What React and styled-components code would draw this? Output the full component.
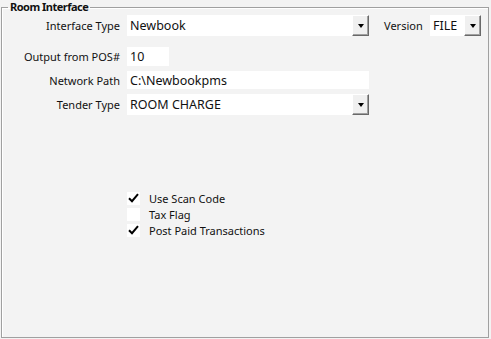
import React from "react"
import styled, { createGlobalStyle } from "styled-components"

const GlobalStyle = createGlobalStyle`
  html, body {
    margin: 0;
    padding: 0;
    background: #f3f3f3;
  }
  body {
    font-family: "Noto Sans", "Open Sans", sans-serif;
    font-size: 11px;
    color: #111;
  }
`

const Page = styled.div`
  width: 491px;
  height: 339px;
  box-sizing: border-box;
  padding: 0 2px 0 1px;
  overflow: hidden;
`

const Group = styled.fieldset`
  margin: 0;
  padding: 0;
  height: 338px;
  box-sizing: border-box;
  border: 1px solid #a0a0a0;
  box-shadow: inset 1px 1px 0 #fff;
`

const Legend = styled.legend`
  margin-left: 6px;
  padding: 0 2px;
  font-weight: bold;
  font-size: 11px;
  letter-spacing: -0.5px;
  line-height: 14px;
  color: #111;
`

const Form = styled.div`
  display: flex;
  flex-direction: column;
  padding-left: 8px;
`

const Row = styled.div`
  display: flex;
  align-items: center;
  margin-top: ${(p) => p.$gap}px;
  height: ${(p) => p.$h}px;
`

const Label = styled.div`
  width: ${(p) => p.$w || 110}px;
  text-align: ${(p) => p.$align || "right"};
  margin-right: 7px;
  font-size: 11px;
  white-space: nowrap;
`

const Field = styled.div`
  width: ${(p) => p.$w}px;
  height: 100%;
  background: #fff;
  box-sizing: border-box;
  padding-left: 3px;
  display: flex;
  align-items: center;
  font-size: 12.5px;
  white-space: nowrap;
  overflow: hidden;
`

const DropButton = styled.div`
  width: 17px;
  height: 100%;
  box-sizing: border-box;
  background: #f0f0f0;
  border-top: 1px solid #fff;
  border-left: 1px solid #fff;
  border-right: 1px solid #696969;
  border-bottom: 1px solid #696969;
  box-shadow: inset -1px -1px 0 #a0a0a0;
  display: flex;
  align-items: center;
  justify-content: center;
  &::after {
    content: "";
    width: 0;
    height: 0;
    border-left: 3.5px solid transparent;
    border-right: 3.5px solid transparent;
    border-top: 4px solid #000;
    margin-top: 1px;
  }
`

const Version = styled.div`
  display: flex;
  align-items: center;
  height: 100%;
  margin-left: 15px;
`

const Checks = styled.div`
  display: flex;
  flex-direction: column;
  margin-top: 75px;
  padding-left: 125px;
`

const CheckRow = styled.label`
  display: flex;
  align-items: center;
  height: 16px;
  font-size: 11px;
`

const Box = styled.span`
  width: 13px;
  height: 13px;
  background: #fff;
  margin-right: 9px;
  display: flex;
  align-items: center;
  justify-content: center;
`

const Check = () => (
  <svg width="11" height="10" viewBox="0 0 11 10">
    <path d="M1 5.2 L4 8.2 L10 1.2" fill="none" stroke="#000" strokeWidth="2" />
  </svg>
)

const Combo = ({ w, value }) => (
  <>
    <Field $w={w}>{value}</Field>
    <DropButton />
  </>
)

const App = () => (
  <>
    <GlobalStyle />
    <Page>
      <Group>
        <Legend>Room Interface</Legend>
        <Form>
          <Row $gap={1} $h={21}>
            <Label>Interface Type</Label>
            <Combo w={225} value="Newbook" />
            <Version>
              <Label $w={39} $align="left">Version</Label>
              <Combo w={34} value="FILE" />
            </Version>
          </Row>
          <Row $gap={11} $h={19}>
            <Label>Output from POS#</Label>
            <Field $w={42}>10</Field>
          </Row>
          <Row $gap={5} $h={18}>
            <Label>Network Path</Label>
            <Field $w={242}>C:\Newbookpms</Field>
          </Row>
          <Row $gap={5} $h={21}>
            <Label>Tender Type</Label>
            <Combo w={225} value="ROOM CHARGE" />
          </Row>
        </Form>
        <Checks>
          <CheckRow>
            <Box><Check /></Box>
            Use Scan Code
          </CheckRow>
          <CheckRow>
            <Box />
            Tax Flag
          </CheckRow>
          <CheckRow>
            <Box><Check /></Box>
            Post Paid Transactions
          </CheckRow>
        </Checks>
      </Group>
    </Page>
  </>
)

export default App
